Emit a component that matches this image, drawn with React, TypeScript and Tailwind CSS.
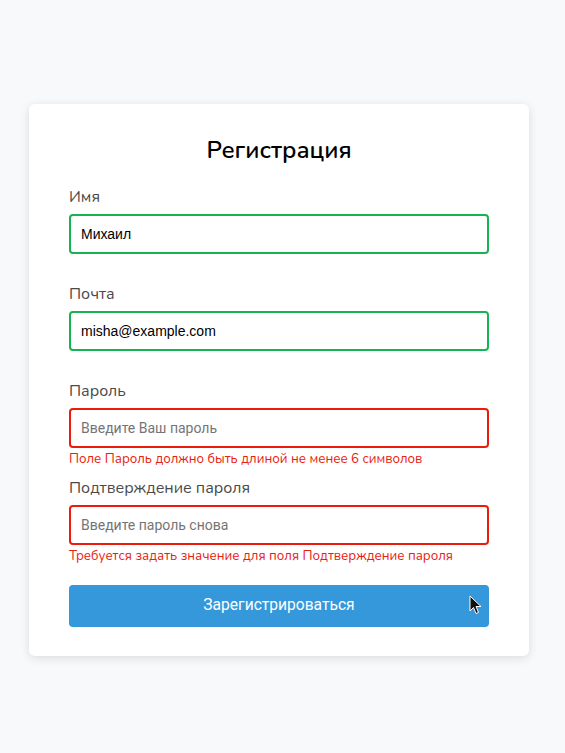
import React from "react"

const fields = [
  { label: "Имя", value: "Михаил", placeholder: "", ok: true, error: "" },
  { label: "Почта", value: "misha@example.com", placeholder: "", ok: true, error: "" },
  {
    label: "Пароль",
    value: "",
    placeholder: "Введите Ваш пароль",
    ok: false,
    error: "Поле Пароль должно быть длиной не менее 6 символов",
  },
  {
    label: "Подтверждение пароля",
    value: "",
    placeholder: "Введите пароль снова",
    ok: false,
    error: "Требуется задать значение для поля Подтверждение пароля",
  },
]

function Cursor() {
  return (
    <svg width="14" height="20" viewBox="0 0 14 20" className="absolute right-[6px] top-[10px]">
      <path d="M1 1 L1 16 L4.5 12.5 L7 18.5 L9.5 17.5 L7 11.5 L12 11.5 Z" fill="#111" stroke="#fff" strokeWidth="1" strokeLinejoin="round" />
    </svg>
  )
}

export default function App() {
  return (
    <div className="min-h-[753px] bg-[#f8f9fb] pt-[104px] pb-[97px] pl-[29px] font-['Nunito','Noto_Sans',sans-serif]">
      <div className="w-[500px] rounded-md bg-white px-10 pt-[30px] pb-[29px] shadow-[0_2px_10px_rgba(0,0,0,0.12)]">
        <h1 className="text-center text-[24px] leading-8 font-semibold text-black mb-[19px]">Регистрация</h1>
        <form onSubmit={(e) => e.preventDefault()}>
          {fields.map((f) => (
            <div key={f.label}>
              <label className="block text-[16px] leading-6 text-[#4a4a4a] mb-[5px]">{f.label}</label>
              <input
                defaultValue={f.value}
                placeholder={f.placeholder}
                className={`block w-full h-10 rounded-[4px] border-2 px-[10px] text-[14px] text-black font-['Liberation_Sans',Arial,sans-serif] placeholder:font-['Roboto',sans-serif] placeholder:text-[#757575] outline-none ${f.ok ? "border-[#16b354]" : "border-[#ec1c0c]"}`}
              />
              <div className="h-[28px] pt-[1px] text-[13.3px] leading-5 text-[#e8210f]">{f.error}</div>
            </div>
          ))}
          <button
            type="submit"
            className="relative mt-[12px] block w-full h-[42px] rounded-[4px] bg-[#3498db] text-white text-[15.6px] font-['Roboto',sans-serif]"
          >
            Зарегистрироваться
            <Cursor />
          </button>
        </form>
      </div>
    </div>
  )
}
